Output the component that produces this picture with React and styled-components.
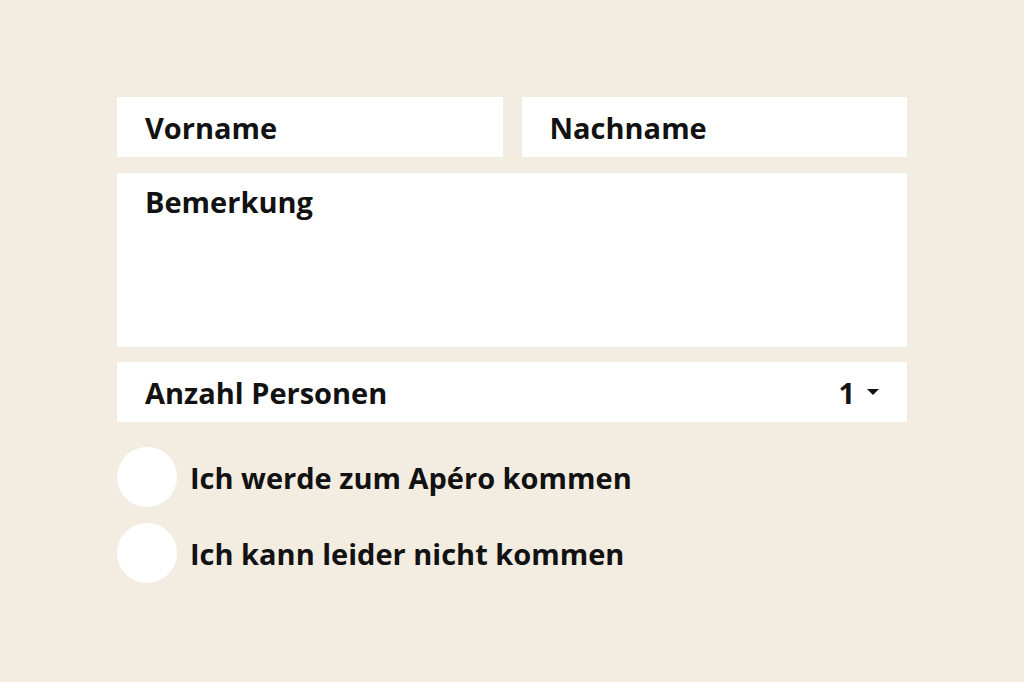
import { createGlobalStyle } from "styled-components";
import styled from "styled-components";

const GlobalStyle = createGlobalStyle`
  body {
    margin: 0;
    background: #f3ece1;
    font-family: "Open Sans", Lato, sans-serif;
    color: #121212;
  }
`;

const Page = styled.div`
  width: 1024px;
  height: 682px;
  box-sizing: border-box;
  padding: 97px 117px 0;
`;

const Form = styled.form`
  display: flex;
  flex-direction: column;
  width: 790px;
`;

const Row = styled.div`
  display: flex;
  gap: 19px;
  margin-bottom: 16px;
`;

const Field = styled.div`
  flex: ${(p) => (p.$grow ? 1 : "none")};
  display: flex;
  align-items: ${(p) => (p.$tall ? "flex-start" : "center")};
  justify-content: space-between;
  height: ${(p) => (p.$tall ? 174 : 60)}px;
  box-sizing: border-box;
  padding: ${(p) => (p.$tall ? "9px 28px" : "0 28px")};
  background: #fff;
  font-size: 29px;
  font-weight: 700;
  margin-bottom: ${(p) => p.$mb || 0}px;
`;

const Select = styled.span`
  display: flex;
  align-items: center;
  gap: 12px;
`;

const Caret = styled.span`
  width: 0;
  height: 0;
  border-left: 6px solid transparent;
  border-right: 6px solid transparent;
  border-top: 6px solid #121212;
`;

const Radios = styled.div`
  display: flex;
  flex-direction: column;
  gap: 16px;
  margin-top: 25px;
`;

const Radio = styled.label`
  display: flex;
  align-items: center;
  gap: 13px;
  font-size: 29px;
  font-weight: 700;
`;

const Dot = styled.span`
  width: 60px;
  height: 60px;
  border-radius: 50%;
  background: #fff;
`;

export default function App() {
  return (
    <Page>
      <GlobalStyle />
      <Form>
        <Row>
          <Field $grow>Vorname</Field>
          <Field $grow>Nachname</Field>
        </Row>
        <Field $tall $mb={15}>Bemerkung</Field>
        <Field>
          Anzahl Personen
          <Select>
            1 <Caret />
          </Select>
        </Field>
        <Radios>
          <Radio>
            <Dot />
            Ich werde zum Apéro kommen
          </Radio>
          <Radio>
            <Dot />
            Ich kann leider nicht kommen
          </Radio>
        </Radios>
      </Form>
    </Page>
  );
}
